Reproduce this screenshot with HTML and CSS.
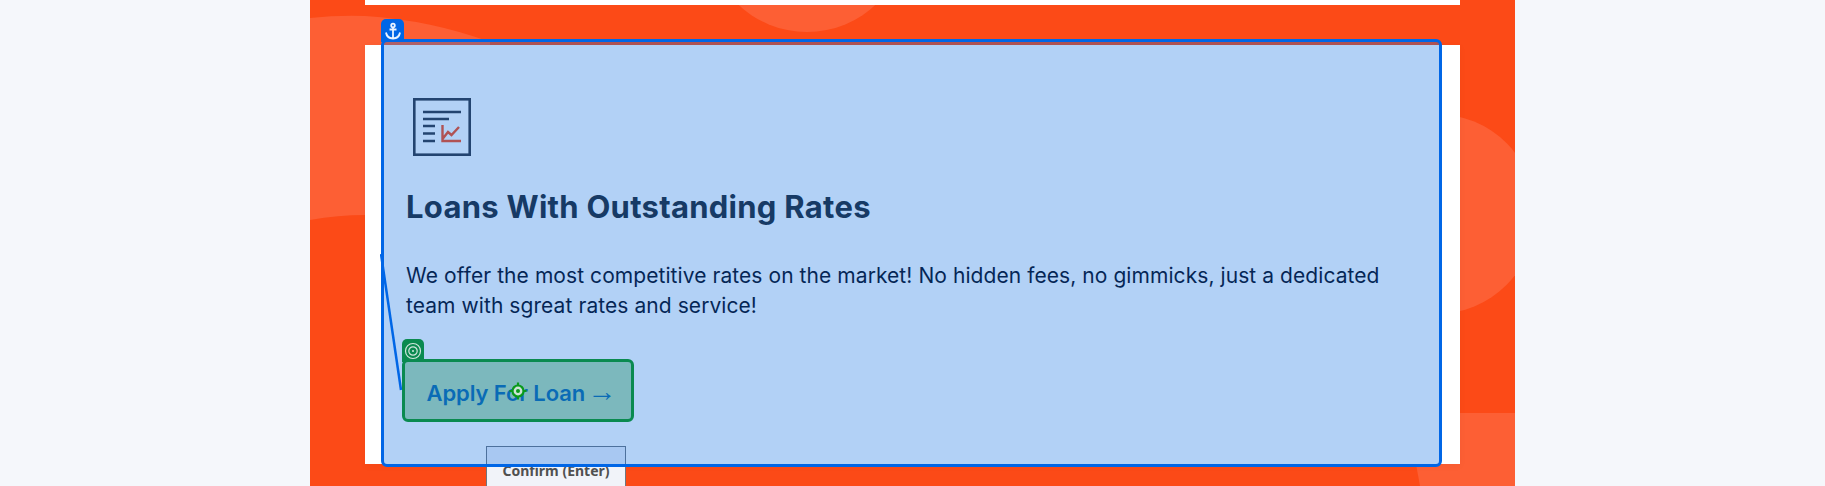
FILE: index.html
```html
<!DOCTYPE html>
<html lang="en">
<head>
<meta charset="utf-8">
<title>Loans With Outstanding Rates</title>
<link rel="stylesheet" href="styles.css">
</head>
<body>
<section class="hero">
  <svg class="decor" viewBox="0 0 1205 486" aria-hidden="true">
    <path class="blob" d="M0 18 Q28 15 55 16 Q120 20 180 42 L180 60 L55 60 L55 215 Q28 215 0 220 Z"/>
    <circle class="blob" cx="497" cy="-68" r="100"/>
    <circle class="blob" cx="1126" cy="214" r="100"/>
    <path class="blob" d="M1205 413 L1106 413 L1106 464 Q1108 475 1110 486 L1205 486 Z"/>
  </svg>
  <div class="card card-top"></div>
  <article class="card card-main">
    <svg class="feature-icon" viewBox="0 0 58 58" width="58" height="58" aria-hidden="true">
      <rect class="ink frame" x="1.3" y="1.3" width="55.4" height="55.4"/>
      <path class="ink" d="M10 14H48M10 21H36M10 28H22M10 35.5H22M10 43H22"/>
      <path class="accent" d="M29.5 27V43H48M29.5 41L35 34L38.5 37L46 29"/>
    </svg>
    <h2 class="title">Loans With Outstanding Rates</h2>
    <p class="lead">We offer the most competitive rates on the market! No hidden fees, no gimmicks, just a dedicated team with sgreat rates and service!</p>
    <a class="apply" href="#">Apply For Loan <span class="arrow">→</span></a>

    <div class="confirm">Confirm (Enter)</div>

    <div class="anchor-box">
      <span class="anchor-tab">
        <svg viewBox="0 0 20 20" width="20" height="20" aria-hidden="true">
          <circle cx="10" cy="4.5" r="1.8"/>
          <path d="M10 6.5V17.5M6.5 8.5H13.5M3 11.5C3.5 15 6.5 17.3 10 17.5C13.5 17.3 16.5 15 17 11.5"/>
        </svg>
      </span>
    </div>

    <svg class="link-line" viewBox="0 0 24 140" width="24" height="140" aria-hidden="true">
      <path d="M1 1L21 137"/>
    </svg>

    <div class="target-box">
      <span class="target-tab">
        <svg viewBox="0 0 20 20" width="20" height="20" aria-hidden="true">
          <circle cx="10" cy="10" r="7.5"/>
          <circle cx="10" cy="10" r="4.2"/>
          <circle class="dot" cx="10" cy="10" r="1"/>
        </svg>
      </span>
      <svg class="target-mark" viewBox="0 0 18 18" width="18" height="18" aria-hidden="true">
        <circle class="ring" cx="9" cy="9" r="5.5"/>
        <circle class="core" cx="9" cy="9" r="2"/>
        <path d="M9 0.5V3M9 15V17.5M0.5 9H3M15 9H17.5"/>
      </svg>
    </div>
  </article>
</section>
</body>
</html>
```

FILE: styles.css
```css
* {
  box-sizing: border-box;
}

html,
body {
  margin: 0;
  height: 486px;
  overflow: hidden;
  background: #f5f7fb;
}

body {
  display: flex;
  justify-content: center;
  font-family: Inter, "Noto Sans", sans-serif;
}

.hero {
  position: relative;
  width: 1205px;
  height: 486px;
  padding: 0 55px;
  overflow: hidden;
  background: #fc4a17;
}

.decor {
  position: absolute;
  inset: 0;
  width: 1205px;
  height: 486px;
}

.blob {
  fill: #fd5f34;
}

.card {
  position: relative;
  background: #fff;
}

.card-top {
  height: 5px;
  margin-bottom: 40px;
}

.card-main {
  height: 419px;
  padding: 53px 41px 0;
  box-shadow: 0 2px 8px rgba(0, 0, 0, 0.04);
}

.feature-icon {
  display: block;
  margin-left: 7px;
}

.ink,
.accent {
  fill: none;
  stroke-width: 2.4;
}

.ink {
  stroke: #33363f;
}

.ink.frame {
  stroke-width: 2.6;
}

.accent {
  stroke: #fc4a17;
}

.title {
  margin: 33px 0 0;
  font-size: 31px;
  line-height: 36px;
  font-weight: 700;
  letter-spacing: 0.27px;
  color: #222730;
}

.lead {
  margin: 36px 0 0;
  width: 1000px;
  font-size: 21px;
  line-height: 30px;
  font-weight: 400;
  letter-spacing: 0.07px;
  color: #0a0a18;
}

.apply {
  display: block;
  width: 232px;
  height: 62px;
  margin: 39px 0 0 -4px;
  padding-left: 24.5px;
  font-size: 22px;
  line-height: 62px;
  font-weight: 600;
  letter-spacing: -0.1px;
  color: #1664f3;
  text-decoration: none;
  white-space: nowrap;
}

.arrow {
  margin-left: -3px;
  font-family: "Liberation Sans", sans-serif;
  font-size: 29px;
  font-weight: 400;
}

.confirm {
  position: absolute;
  left: 121px;
  top: 401px;
  width: 140px;
  height: 60px;
  padding-top: 15px;
  background: #f1f3f9;
  border: 1px solid #6f7680;
  font-family: "Noto Sans", sans-serif;
  font-size: 14px;
  line-height: 18px;
  font-weight: 700;
  text-align: center;
  color: #505050;
}

.anchor-box {
  position: absolute;
  left: 16px;
  top: -6px;
  width: 1061px;
  height: 428px;
  background: rgba(0, 102, 224, 0.3);
  border: 3px solid #0066e6;
  border-radius: 6px;
}

.anchor-tab {
  position: absolute;
  left: -3px;
  bottom: 100%;
  display: flex;
  align-items: center;
  justify-content: center;
  width: 23px;
  height: 23px;
  background: #0066e6;
  border-radius: 5px 5px 0 0;
}

.anchor-tab svg {
  fill: none;
  stroke: #e8f2ff;
  stroke-width: 1.8;
}

.link-line {
  position: absolute;
  left: 15px;
  top: 208px;
  fill: none;
  stroke: #0066e6;
  stroke-width: 2.5;
}

.target-box {
  position: absolute;
  left: 37px;
  top: 314px;
  width: 232px;
  height: 63px;
  background: rgba(0, 125, 55, 0.3);
  border: 3px solid #0a8a50;
  border-radius: 6px;
}

.target-tab {
  position: absolute;
  left: -3px;
  bottom: 100%;
  display: flex;
  align-items: center;
  justify-content: center;
  width: 22px;
  height: 23px;
  background: #0a8a50;
  border-radius: 5px 5px 0 0;
}

.target-tab svg {
  fill: none;
  stroke: #cfe6dc;
  stroke-width: 1.2;
}

.target-tab .dot {
  fill: #cfe6dc;
  stroke: none;
}

.target-mark {
  position: absolute;
  left: 104px;
  top: 20px;
  fill: none;
  stroke: #0a9a1c;
  stroke-width: 2.2;
}

.target-mark .ring {
  fill: #cde4d6;
}

.target-mark .core {
  fill: #0a9a1c;
  stroke: none;
}
```
